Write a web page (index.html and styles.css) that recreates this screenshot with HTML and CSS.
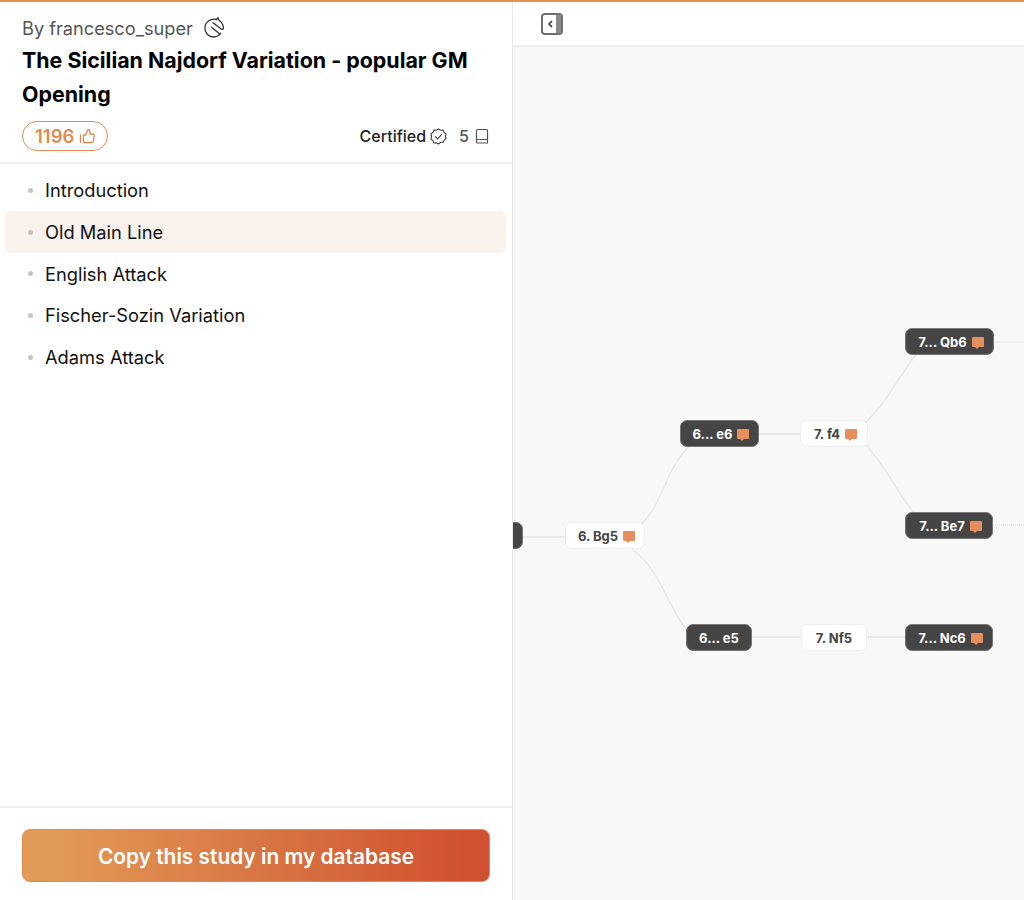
FILE: index.html
```html
<!DOCTYPE html>
<html lang="en">
<head>
<meta charset="utf-8">
<title>The Sicilian Najdorf Variation</title>
<link rel="stylesheet" href="styles.css">
</head>
<body>
<div class="app">
  <aside class="sidebar">
    <header class="study-head">
      <div class="author">
        <span>By francesco_super</span>
        <svg class="knight" viewBox="0 0 20 21" width="20" height="21" fill="none" stroke="#333" stroke-width="1.300" stroke-linecap="round" stroke-linejoin="round"><path d="M12.500 2.500C7 1 1.200 4.800.9 10.800c-.3 5 3.700 9.200 8.600 9.200 3 0 5.700-1.500 7.300-3.800"/><path d="M12.500 2.500l1.600-1.800.7 2.200c2.700 2 4.400 5 4.700 8 .1 1.300-1.200 2-2.200 1.200L9 5.800"/><path d="M7.500 10.200l8 6.500"/></svg>
      </div>
      <h1 class="title">The Sicilian Najdorf Variation - popular GM Opening</h1>
      <div class="meta">
        <div class="likes">
          <span>1196</span>
          <svg viewBox="0 0 16 16" width="16" height="16" fill="none" stroke="#e08a52" stroke-width="1.300" stroke-linejoin="round" stroke-linecap="round"><path d="M1.500 7v7.500M4.500 7h2L9 1.500c1.300 0 2 .9 2 2V6h3c.8 0 1.300.7 1.200 1.500l-.9 5.500c-.1.900-.8 1.500-1.600 1.500H4.500z"/></svg>
        </div>
        <div class="facts">
          <span class="certified">Certified</span>
          <svg class="badge" viewBox="0 0 18 18" width="17" height="17" fill="none" stroke="#333" stroke-width="1.100" stroke-linecap="round" stroke-linejoin="round"><path d="M9 1l2.300 1.300 2.600-.1 1 2.400 2.100 1.600-.7 2.800.7 2.300-2.100 1.500-1 2.400-2.600-.1L9 17l-2.300-1.300-2.600.1-1-2.400L1 11.800l.7-2.800L1 6.200l2.100-1.600 1-2.400 2.600.1z"/><path d="M5.800 9.200l2.300 2.300 4.200-4.600"/></svg>
          <span class="count">5</span>
          <svg class="book" viewBox="0 0 14 16" width="14" height="16" fill="none" stroke="#555" stroke-width="1.200" stroke-linejoin="round"><path d="M1.500 12.500V2.500c0-.6.400-1 1-1h9c.6 0 1 .4 1 1v12.500h-10c-.6 0-1-.4-1-1v-1.500c0-.6.400-1 1-1h10"/></svg>
        </div>
      </div>
    </header>
    <ul class="chapters">
      <li class="chapter"><span class="dot"></span>Introduction</li>
      <li class="chapter active"><span class="dot"></span>Old Main Line</li>
      <li class="chapter"><span class="dot"></span>English Attack</li>
      <li class="chapter"><span class="dot"></span>Fischer-Sozin Variation</li>
      <li class="chapter"><span class="dot"></span>Adams Attack</li>
    </ul>
    <footer class="study-foot">
      <button class="copy" type="button">Copy this study in my database</button>
    </footer>
  </aside>
  <main class="board">
    <div class="toolbar">
      <svg class="collapse" viewBox="0 0 22 22" width="22" height="22"><rect x="1" y="1" width="20" height="20" rx="3" fill="#fff" stroke="#6e6e6e" stroke-width="2"/><rect x="15" y="2" width="5" height="18" fill="#8a8a8a"/><path d="M10.500 8.500L8 11l2.500 2.500" fill="none" stroke="#555" stroke-width="1.800" stroke-linecap="round" stroke-linejoin="round"/></svg>
    </div>
    <div class="canvas">
      <svg class="edges" width="511" height="853" viewBox="0 0 511 853" fill="none" stroke="#e6e6e6" stroke-width="1.300">
        <path d="M10 490H52"/>
        <path d="M125 480C150 460 150 425 178 397"/>
        <path d="M120 503C150 525 155 565 180 590"/>
        <path d="M246 387H288"/>
        <path d="M239 590H289"/>
        <path d="M354 590H393"/>
        <path d="M350 378C375 355 385 330 405 305"/>
        <path d="M350 395C375 420 385 450 405 470"/>
        <path d="M481 295H511"/>
        <path d="M480 478H511" stroke-dasharray="1 1"/>
      </svg>
      <div class="node dark stub"></div>
      <div class="node light n-bg5">6. Bg5<i class="note"></i></div>
      <div class="node dark n-e6">6... e6<i class="note"></i></div>
      <div class="node dark n-e5">6... e5</div>
      <div class="node light n-f4">7. f4<i class="note"></i></div>
      <div class="node light n-nf5">7. Nf5</div>
      <div class="node dark n-qb6">7... Qb6<i class="note"></i></div>
      <div class="node dark n-be7">7... Be7<i class="note"></i></div>
      <div class="node dark n-nc6">7... Nc6<i class="note"></i></div>
    </div>
  </main>
</div>
</body>
</html>
```

FILE: styles.css
```css
* { box-sizing: border-box; }
html, body { margin: 0; height: 100%; }
body {
  font-family: Inter, "Noto Sans", sans-serif;
  color: #111;
  background: #fff;
  overflow: hidden;
}
.app {
  display: flex;
  height: 900px;
  border-top: 2px solid #e98f4f;
}
.sidebar {
  width: 513px;
  flex: none;
  display: flex;
  flex-direction: column;
  border-right: 1px solid #e8e8e8;
}
.study-head {
  height: 162px;
  padding: 13px 23px 0 22px;
  border-bottom: 2px solid #eee;
}
.author {
  display: flex;
  align-items: center;
  gap: 11px;
  height: 26px;
  font-size: 18.200px;
  color: #555;
}
.knight { margin-top: -1px; }
.title {
  margin: 3px 0 0;
  font-size: 21.400px;
  line-height: 33.500px;
  font-weight: 700;
  color: #000;
}
.meta {
  display: flex;
  justify-content: space-between;
  align-items: center;
  margin-top: 10px;
}
.likes {
  display: flex;
  align-items: center;
  gap: 5px;
  height: 30px;
  padding: 0 12px;
  border: 1.500px solid #e08a52;
  border-radius: 15px;
  font-size: 18.500px;
  font-weight: 600;
  color: #e08a52;
}
.facts {
  display: flex;
  align-items: center;
  font-size: 16px;
  font-weight: 500;
  color: #222;
}
.certified { margin-right: 4px; }
.count { margin: 0 6px 0 12px; color: #555; }
.chapters {
  flex: 1;
  list-style: none;
  margin: 0;
  padding: 5.500px 6px 0 5px;
}
.chapter {
  display: flex;
  align-items: center;
  height: 41.700px;
  padding-left: 23px;
  font-size: 18.300px;
  color: #111;
  border-radius: 6px;
}
.chapter.active { background: #f9f2ed; }
.dot {
  width: 5px;
  height: 5px;
  margin-right: 12px;
  border-radius: 50%;
  background: #c4c4c4;
}
.study-foot {
  height: 94px;
  padding: 21px 22px 0;
  border-top: 2px solid #eee;
}
.copy {
  display: block;
  width: 468px;
  height: 53px;
  padding: 2px 0 0;
  border: 1px solid #e08a52;
  border-radius: 8px;
  background: linear-gradient(90deg, #e29b57 5%, #d0512f 95%);
  color: #fff;
  font-family: inherit;
  font-size: 20.900px;
  font-weight: 600;
}
.board {
  flex: 1;
  display: flex;
  flex-direction: column;
  min-width: 0;
}
.toolbar {
  height: 45px;
  flex: none;
  display: flex;
  align-items: center;
  padding: 0 0 0 28px;
  border-bottom: 2px solid #eee;
}
.canvas {
  position: relative;
  flex: 1;
  background: #f8f8f8;
  overflow: hidden;
}
.edges { position: absolute; left: 0; top: 0; }
.node {
  position: absolute;
  display: flex;
  align-items: center;
  justify-content: center;
  height: 27px;
  border-radius: 7px;
  font-size: 13px;
  font-weight: 700;
  white-space: nowrap;
}
.node.dark { background: #454545; color: #fff; border: 1px solid #777; }
.node.light { background: #fff; color: #444; border: 1px solid #eee; }
.note {
  position: relative;
  display: block;
  width: 12px;
  height: 10px;
  margin: 0 -3px 0 5px;
  background: #e58f5e;
  border-radius: 1px;
}
.note::after {
  content: "";
  position: absolute;
  left: 3px;
  top: 10px;
  border: 2px solid transparent;
  border-top-color: #e58f5e;
  border-bottom: 0;
}
.stub { left: -20px; top: 475px; width: 30px; height: 27px; border-color: #454545; }
.n-bg5 { left: 52px; top: 475px; width: 80px; }
.n-e6 { left: 167px; top: 373px; width: 79px; }
.n-e5 { left: 173px; top: 577px; width: 66px; }
.n-f4 { left: 287px; top: 373px; width: 68px; }
.n-nf5 { left: 288px; top: 577px; width: 66px; }
.n-qb6 { left: 392px; top: 281px; width: 89px; }
.n-be7 { left: 392px; top: 465px; width: 88px; }
.n-nc6 { left: 392px; top: 577px; width: 88px; }
```
